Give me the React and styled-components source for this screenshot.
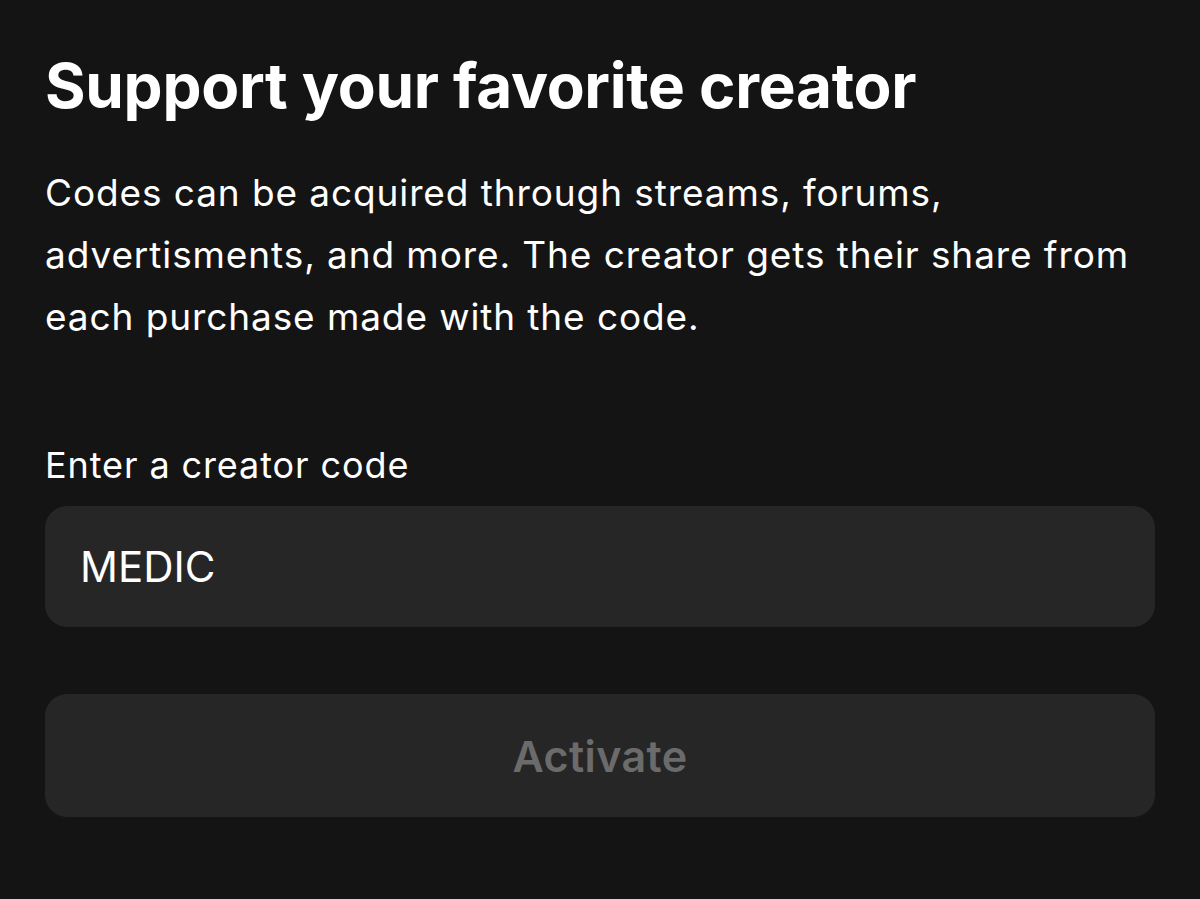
import React, { useState } from 'react';
import styled, { createGlobalStyle } from 'styled-components';

const GlobalStyle = createGlobalStyle`
  html, body {
    margin: 0;
    background: #141414;
  }
  body {
    font-family: Inter, "Noto Sans", sans-serif;
    color: #ffffff;
    -webkit-font-smoothing: antialiased;
  }
`;

const Page = styled.main`
  min-height: 899px;
  padding: 46px 45px 0 45px;
  box-sizing: border-box;
`;

const Title = styled.h1`
  margin: 0;
  font-size: 62px;
  font-weight: 700;
  line-height: 80px;
  letter-spacing: -0.3px;
`;

const Lead = styled.p`
  margin: 36px 0 0 0;
  font-size: 37px;
  font-weight: 400;
  line-height: 62px;
  letter-spacing: 0.9px;
  max-width: 1100px;
`;

const Field = styled.label`
  display: flex;
  flex-direction: column;
  margin-top: 92px;
`;

const FieldLabel = styled.span`
  font-size: 36px;
  line-height: 50px;
  letter-spacing: 0.9px;
`;

const CodeInput = styled.input`
  margin-top: 16px;
  height: 121px;
  box-sizing: border-box;
  width: 100%;
  border: none;
  outline: none;
  border-radius: 22px;
  background: #262626;
  color: #ffffff;
  padding: 0 35px;
  font-family: inherit;
  font-size: 42px;
`;

const ActivateButton = styled.button`
  display: block;
  width: 100%;
  height: 123px;
  margin-top: 67px;
  border: none;
  border-radius: 22px;
  background: #262626;
  color: ${(p) => (p.disabled ? '#6b6b6b' : '#ffffff')};
  font-family: inherit;
  font-size: 43px;
  font-weight: 600;
  letter-spacing: 0.4px;
`;

export default function App() {
  const [code, setCode] = useState('MEDIC');

  return (
    <>
      <GlobalStyle />
      <Page>
        <Title>Support your favorite creator</Title>
        <Lead>
          Codes can be acquired through streams, forums, advertisments, and
          more. The creator gets their share from each purchase made with the
          code.
        </Lead>
        <Field>
          <FieldLabel>Enter a creator code</FieldLabel>
          <CodeInput value={code} onChange={(e) => setCode(e.target.value)} />
        </Field>
        <ActivateButton disabled>Activate</ActivateButton>
      </Page>
    </>
  );
}
